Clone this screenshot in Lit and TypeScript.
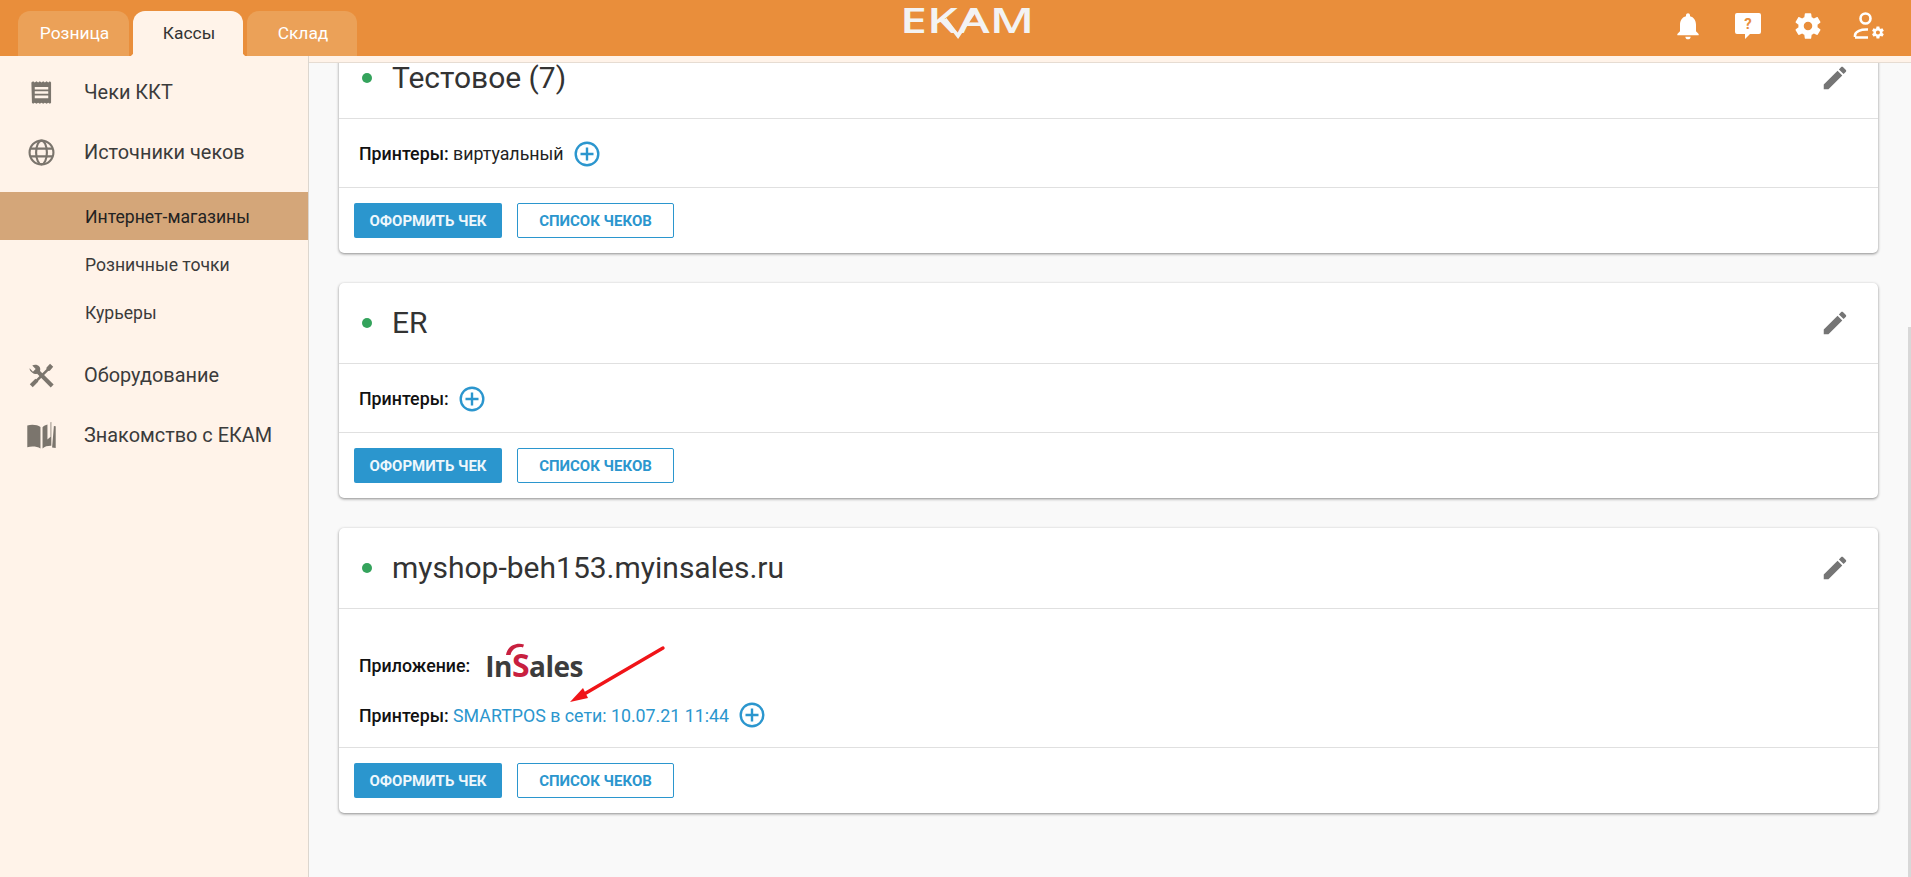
import { LitElement, html, css, svg } from "lit";
import { customElement } from "lit/decorators.js";

const BELL = "M12 22c1.1 0 2-.9 2-2h-4c0 1.1.89 2 2 2zm6-6v-5c0-3.07-1.64-5.64-4.5-6.32V4c0-.83-.67-1.5-1.5-1.5s-1.5.67-1.5 1.5v.68C7.63 5.36 6 7.92 6 11v5l-2 2v1h16v-1l-2-2z";
const GEAR = "M19.14,12.94c0.04-0.3,0.06-0.61,0.06-0.94c0-0.32-0.02-0.64-0.07-0.94l2.03-1.58c0.18-0.14,0.23-0.41,0.12-0.61 l-1.92-3.32c-0.12-0.22-0.37-0.29-0.59-0.22l-2.39,0.96c-0.5-0.38-1.03-0.7-1.62-0.94L14.4,2.81c-0.04-0.24-0.24-0.41-0.48-0.41 h-3.84c-0.24,0-0.43,0.17-0.47,0.41L9.25,5.35C8.66,5.59,8.12,5.92,7.63,6.29L5.24,5.33c-0.22-0.08-0.47,0-0.59,0.22L2.74,8.87 C2.62,9.08,2.66,9.34,2.86,9.48l2.03,1.58C4.84,11.36,4.8,11.69,4.8,12s0.02,0.64,0.07,0.94l-2.03,1.58 c-0.18,0.14-0.23,0.41-0.12,0.61l1.92,3.32c0.12,0.22,0.37,0.29,0.59,0.22l2.39-0.96c0.5,0.38,1.03,0.7,1.62,0.94l0.36,2.54 c0.05,0.24,0.24,0.41,0.48,0.41h3.84c0.24,0,0.44-0.17,0.47-0.41l0.36-2.54c0.59-0.24,1.13-0.56,1.62-0.94l2.39,0.96 c0.22,0.08,0.47,0,0.59-0.22l1.92-3.32c0.12-0.22,0.07-0.47-0.12-0.61L19.14,12.94z M12,15.2c-1.77,0-3.2-1.43-3.2-3.2 s1.43-3.2,3.2-3.2s3.2,1.43,3.2,3.2S13.77,15.2,12,15.2z";
const PENCIL = "M3 17.25V21h3.75L17.81 9.94l-3.75-3.75L3 17.25zM20.71 7.04c.39-.39.39-1.02 0-1.41l-2.34-2.34c-.39-.39-1.02-.39-1.41 0l-1.83 1.83 3.75 3.75 1.83-1.83z";

const plus = html`<svg class="plus" viewBox="0 0 26 26" width="26" height="26" fill="none" stroke="#2b96ce" stroke-width="2.4"><circle cx="13" cy="13" r="11.3"/><path d="M6.5 13h13M13 6.5v13"/></svg>`;
const pencil = html`<svg class="pencil" viewBox="0 0 24 24" width="30" height="30" fill="#757575"><path d="${PENCIL}"/></svg>`;

const icons: Record<string, unknown> = {
  receipt: svg`<path fill-rule="evenodd" d="M3 3 l1.5-1 1.5 1 1.5-1 1.5 1 1.5-1 1.5 1 1.5-1 1.5 1 1.5-1 1.5 1 1.5-1 1 1v18l-1 1-1.5-1-1.5 1-1.5-1-1.5 1-1.5-1-1.5 1-1.5-1-1.5 1-1.5-1-1.5 1-1-1zM6 7v2.4h12V7zM6 10.8v2.4h12v-2.4zM6 14.6V17h12v-2.4z" fill="#7b756d"/>`,
  globe: svg`<g fill="none" stroke="#7b756d" stroke-width="1.9"><circle cx="12" cy="12" r="10.6"/><ellipse cx="12" cy="12" rx="4.8" ry="10.6"/><path d="M2 8.5h20M2 15.5h20"/></g>`,
  tools: svg`<g fill="#7b756d"><path d="M19.6 1.6l2.8 2.6-3 3.6-1.5.2-9.6 9.6-1.6-1.6 9.6-9.6.2-1.5z"/><path d="M6.6 14.8l2.6 2.6-5 5-2.6-2.6z"/><path d="M1.4 5.6l3 3 2.4-2.4-3-3C5.6 2 8.6 2.2 10 4c1 1.3 1.1 2.7.7 3.9L22.8 20l-2.6 2.6L8.1 10.5c-1.4.5-3 .2-4.2-.9-1.5-1.1-2.7-2.4-2.5-4z"/></g>`,
  book: svg`<g fill="#7b756d"><path d="M11.2 5.5C9 3.8 5 3.3 1 4.2V21c4-.9 7.6-.5 10.2 1z"/><path d="M12.8 5.6c1-.9 2.4-1.7 3.8-2.1V15l2.4-2V1.8l.6-.2V20c-2.6-.1-5 .5-6.8 2z"/><path d="M21.6 4.6l1.4.3V21.6c-1-.2-1.8-.4-2.8-.4z" /></g>`,
};

const card = (title: string, body: unknown, arrow = false) => html`
  <section class="card">
    <header class="card-head">
      <span class="dot"></span>
      <h2 class="title">${title}</h2>
      ${pencil}
    </header>
    <div class="card-body">
      ${body}
      ${arrow ? html`<svg class="arrow" width="110" height="70" viewBox="0 0 110 70"><path d="M97 6 20 51" stroke="#f01418" stroke-width="3.4" stroke-linecap="round" fill="none"/><path d="M4 60 17 46 22 56z" fill="#f01418"/></svg>` : ""}
    </div>
    <footer class="card-foot">
      <button class="btn primary">ОФОРМИТЬ ЧЕК</button>
      <button class="btn outline">СПИСОК ЧЕКОВ</button>
    </footer>
  </section>
`;

@customElement("app-root")
export class AppRoot extends LitElement {
  static styles = css`
    :host { display: flex; flex-direction: column; height: 877px; overflow: hidden; font-family: Roboto, "Noto Sans", sans-serif; background: #fff3e9; color: #333; }
    .topbar { height: 56px; flex: none; background: #e98e3b; display: grid; grid-template-columns: 1fr auto 1fr; align-items: stretch; }
    .tabs { display: flex; gap: 4px; padding: 11px 0 0 18px; }
    .tab { width: 110px; height: 45px; box-sizing: border-box; display: flex; align-items: center; justify-content: center; padding: 0 0 1px 2px; border-radius: 12px 12px 0 0; background: #eba158; color: #fff; font-size: 17.4px; }
    .tab:first-child { width: 111px; }
    .tab.on { background: #fff3e9; color: #333; position: relative; }
    .tab.on::before, .tab.on::after { content: ""; position: absolute; bottom: 0; }
    .tab.on::before { left: -4px; width: 4px; height: 4px; background: radial-gradient(circle at 0 0, transparent 4px, #fff3e9 4.5px); }
    .tab.on::after { right: -4px; width: 4px; height: 4px; background: radial-gradient(circle at 100% 0, transparent 4px, #fff3e9 4.5px); }
    .logo { position: relative; width: 126px; height: 40px; margin-left: 20px; color: #f3f3f3; }
    .logo-text { position: absolute; left: -3px; top: 0; font-family: "Open Sans", sans-serif; font-size: 35px; line-height: 40px; font-weight: 600; transform: scaleX(1.38); transform-origin: left center; white-space: nowrap; }
    .logo svg { position: absolute; left: 0; top: 0; }
    .actions { display: flex; justify-content: flex-end; align-items: flex-start; gap: 28px; padding: 10px 27px 0 0; }
    .actions svg { display: block; width: 32px; height: 32px; }
    .content { flex: 1; min-height: 0; display: flex; }
    .sidebar { width: 308px; flex: none; padding-top: 6px; border-right: 1px solid #dcd6cf; }
    .nav-item { height: 60px; display: flex; align-items: center; gap: 29px; padding-left: 28px; font-size: 19.9px; color: #3b3b3b; }
    .nav-item svg { width: 27px; height: 27px; flex: none; }
    .nav-item svg.wide { width: 31px; height: 31px; margin: 0 -2px; }
    .subnav { margin: 10px 0 9px; }
    .sub-item { height: 48px; box-sizing: border-box; padding: 1px 0 0 85px; display: flex; align-items: center; font-size: 17.6px; color: #3b3b3b; }
    .sub-item.on { background: #d4a679; color: #222; }
    .main-wrap { flex: 1; min-width: 0; padding-top: 6px; display: flex; }
    .main { flex: 1; border-top: 1px solid #e6dcd2; background: #f9f9f9; overflow: hidden; padding: 0 33px 0 30px; position: relative; }
    .scroll-thumb { position: absolute; right: 0; top: 264px; bottom: 0; width: 3px; background: #d8d8d8; }
    .cards { margin-top: -25px; display: flex; flex-direction: column; gap: 30px; }
    .card { background: #fff; border-radius: 5px; box-shadow: 0 1px 3px rgba(0,0,0,.45); }
    .card-head { height: 81px; box-sizing: border-box; display: flex; align-items: center; padding: 0 28px 0 23px; border-bottom: 1px solid #e0e0e0; }
    .dot { width: 10px; height: 10px; border-radius: 50%; background: #34a35c; flex: none; margin-right: 20px; }
    .title { margin: -1px 0 0; font-size: 30px; font-weight: 400; color: #333; flex: 1; }
    .pencil { flex: none; }
    .card-body { position: relative; padding: 0 20px; border-bottom: 1px solid #e0e0e0; display: flex; flex-direction: column; justify-content: center; font-size: 17.8px; color: #222; }
    .row { height: 68px; box-sizing: border-box; padding-top: 1px; display: flex; align-items: center; }
    .rows { padding: 32px 0 8px; }
    .rows .row { height: 48px; padding-top: 0; }
    .rows .row + .row { height: 50px; padding-top: 2px; }
    .label { font-weight: 500; color: #111; }
    .link { color: #2b96ce; }
    .plus { margin-left: 10px; flex: none; }
    .insales { position: relative; margin-left: 15px; font-family: "Open Sans", sans-serif; font-size: 28px; font-weight: 700; letter-spacing: -.5px; color: #3c3c3c; line-height: 30px; }
    .insales b { color: #c8203f; font-weight: 700; font-size: 32px; line-height: 30px; }
    .insales svg { position: absolute; left: 21px; top: -7px; }
    .arrow { position: absolute; left: 227px; top: 33px; }
    .card-foot { height: 65px; box-sizing: border-box; padding: 15px 0 0 15px; display: flex; gap: 15px; }
    .btn { height: 35px; border-radius: 2px; font-family: Roboto, sans-serif; font-size: 15px; font-weight: 700; padding: 0; cursor: pointer; }
    .primary { width: 148px; background: #2b96ce; color: #eef7fc; border: none; }
    .outline { width: 157px; background: #fff; color: #2b96ce; border: 1px solid #2b96ce; }
  `;

  render() {
    return html`
      <div class="topbar">
        <nav class="tabs">
          <div class="tab">Розница</div>
          <div class="tab on">Кассы</div>
          <div class="tab">Склад</div>
        </nav>
        <div class="logo" aria-label="EKAM">
          <span class="logo-text">EKAM</span>
          <svg width="126" height="40" viewBox="0 0 126 40" fill="none" stroke="#f3f3f3"><path d="M42 19 55 36 73 9" stroke-width="3.6" stroke-linejoin="miter"/></svg>
        </div>
        <div class="actions">
          <svg viewBox="0 0 24 24" fill="#fff"><path d="${BELL}"/></svg>
          <svg viewBox="0 0 32 32"><path fill="#fff" d="M5 3h22a2 2 0 0 1 2 2v17a2 2 0 0 1-2 2H18l-5 5v-5H5a2 2 0 0 1-2-2V5a2 2 0 0 1 2-2z"/><text x="16" y="19" text-anchor="middle" font-family="Roboto, sans-serif" font-size="15" font-weight="700" fill="#e98e3b">?</text></svg>
          <svg viewBox="0 0 24 24" fill="#fff"><path d="${GEAR}"/></svg>
          <svg viewBox="0 0 32 32"><g fill="none" stroke="#fff" stroke-width="2.6"><circle cx="13.5" cy="8.5" r="5"/><path d="M3 27.5h13M3 27v-1.5c0-4 6-6.5 13-6"/></g><g transform="translate(18.5 15) scale(.62)"><path fill="#fff" d="${GEAR}"/></g></svg>
        </div>
      </div>
      <div class="content">
        <aside class="sidebar">
          <div class="nav-item"><svg viewBox="0 0 24 24">${icons.receipt}</svg>Чеки ККТ</div>
          <div class="nav-item"><svg viewBox="0 0 24 24">${icons.globe}</svg>Источники чеков</div>
          <div class="subnav">
            <div class="sub-item on">Интернет-магазины</div>
            <div class="sub-item">Розничные точки</div>
            <div class="sub-item">Курьеры</div>
          </div>
          <div class="nav-item"><svg viewBox="0 0 24 24">${icons.tools}</svg>Оборудование</div>
          <div class="nav-item"><svg class="wide" viewBox="0 0 24 24">${icons.book}</svg>Знакомство с ЕКАМ</div>
        </aside>
        <div class="main-wrap">
          <main class="main">
            <div class="cards">
              ${card("Тестовое (7)", html`<div class="row"><span class="label">Принтеры:</span><span>&nbsp;виртуальный</span>${plus}</div>`)}
              ${card("ER", html`<div class="row"><span class="label">Принтеры:</span>${plus}</div>`)}
              ${card("myshop-beh153.myinsales.ru", html`
                <div class="rows">
                  <div class="row"><span class="label">Приложение:</span>
                    <span class="insales">In<b>S</b>ales<svg width="24" height="13" viewBox="0 0 24 13" fill="#c8203f"><path d="M0 12C1 4 9-1 18 1.5L17 4.5C11 3 6 6 4.5 12z"/></svg></span>
                  </div>
                  <div class="row"><span class="label">Принтеры:</span><span class="link">&nbsp;SMARTPOS в сети: 10.07.21 11:44</span>${plus}</div>
                </div>`, true)}
            </div>
            <div class="scroll-thumb"></div>
          </main>
        </div>
      </div>
    `;
  }
}
